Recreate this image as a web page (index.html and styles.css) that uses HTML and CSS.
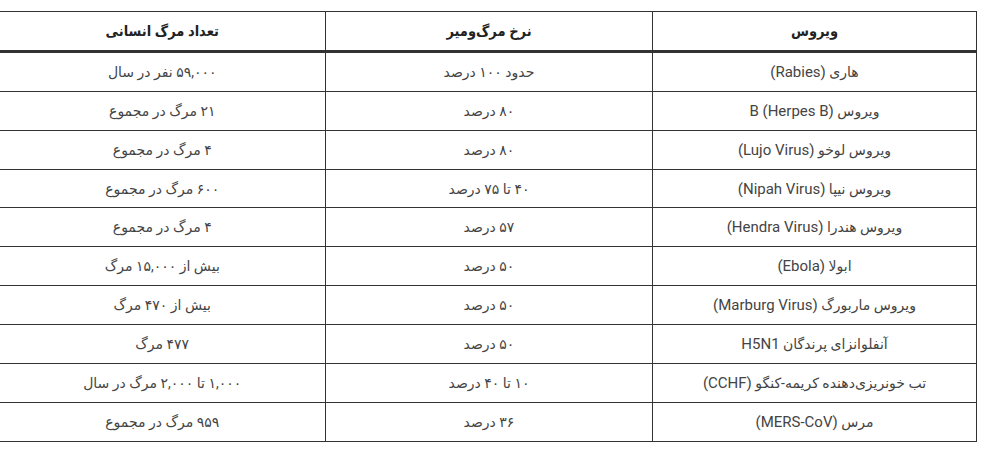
FILE: index.html
```html
<!DOCTYPE html>
<html lang="fa" dir="rtl">
<head>
<meta charset="utf-8">
<link rel="stylesheet" href="styles.css">
</head>
<body>
<div class="page">
<table class="virus-table">
<colgroup><col class="col-virus"><col class="col-rate"><col class="col-deaths"></colgroup>
<thead>
<tr><th>ویروس</th><th>نرخ مرگ‌ومیر</th><th>تعداد مرگ انسانی</th></tr>
</thead>
<tbody>
<tr><td>هاری <span class="en">(Rabies)</span></td><td>حدود ۱۰۰ درصد</td><td>۵۹,۰۰۰ نفر در سال</td></tr>
<tr><td>ویروس <span class="en">B (Herpes B)</span></td><td>۸۰ درصد</td><td>۲۱ مرگ در مجموع</td></tr>
<tr><td>ویروس لوخو <span class="en">(Lujo Virus)</span></td><td>۸۰ درصد</td><td>۴ مرگ در مجموع</td></tr>
<tr><td>ویروس نیپا <span class="en">(Nipah Virus)</span></td><td>۴۰ تا ۷۵ درصد</td><td>۶۰۰ مرگ در مجموع</td></tr>
<tr><td>ویروس هندرا <span class="en">(Hendra Virus)</span></td><td>۵۷ درصد</td><td>۴ مرگ در مجموع</td></tr>
<tr><td>ابولا <span class="en">(Ebola)</span></td><td>۵۰ درصد</td><td>بیش از ۱۵,۰۰۰ مرگ</td></tr>
<tr><td>ویروس ماربورگ <span class="en">(Marburg Virus)</span></td><td>۵۰ درصد</td><td>بیش از ۴۷۰ مرگ</td></tr>
<tr><td>آنفلوانزای پرندگان <span class="en">H5N1</span></td><td>۵۰ درصد</td><td>۴۷۷ مرگ</td></tr>
<tr><td>تب خونریزی‌دهنده کریمه-کنگو <span class="en">(CCHF)</span></td><td>۱۰ تا ۴۰ درصد</td><td>۱,۰۰۰ تا ۲,۰۰۰ مرگ در سال</td></tr>
<tr><td>مرس <span class="en">(MERS-CoV)</span></td><td>۳۶ درصد</td><td>۹۵۹ مرگ در مجموع</td></tr>
</tbody>
</table>
</div>
</body>
</html>
```
FILE: styles.css
```css
html, body {
  margin: 0;
  padding: 0;
  background: #fff;
}
.page {
  padding: 11px 0 0 0;
  width: 985px;
}
.virus-table {
  width: 977px;
  margin-right: 8px;
  border-collapse: collapse;
  table-layout: fixed;
  font-family: Roboto, "DejaVu Sans", sans-serif;
  font-size: 14px;
  color: #444;
}
.virus-table th,
.virus-table td {
  border: 1px solid #333;
  text-align: center;
  vertical-align: middle;
  padding: 0 4px;
}
.virus-table th {
  height: 38px;
  font-family: Roboto, "DejaVu Sans Condensed", "DejaVu Sans", sans-serif;
  font-weight: bold;
  font-size: 14.5px;
  color: #222;
  border-bottom: 3px solid #333;
}
.virus-table td {
  height: 37.86px;
}
.virus-table .en {
  font-size: 15px;
}
.virus-table tr > :last-child {
  border-left: none;
}
.col-virus { width: 324px; }
.col-rate { width: 327px; }
.col-deaths { width: 326px; }
```
